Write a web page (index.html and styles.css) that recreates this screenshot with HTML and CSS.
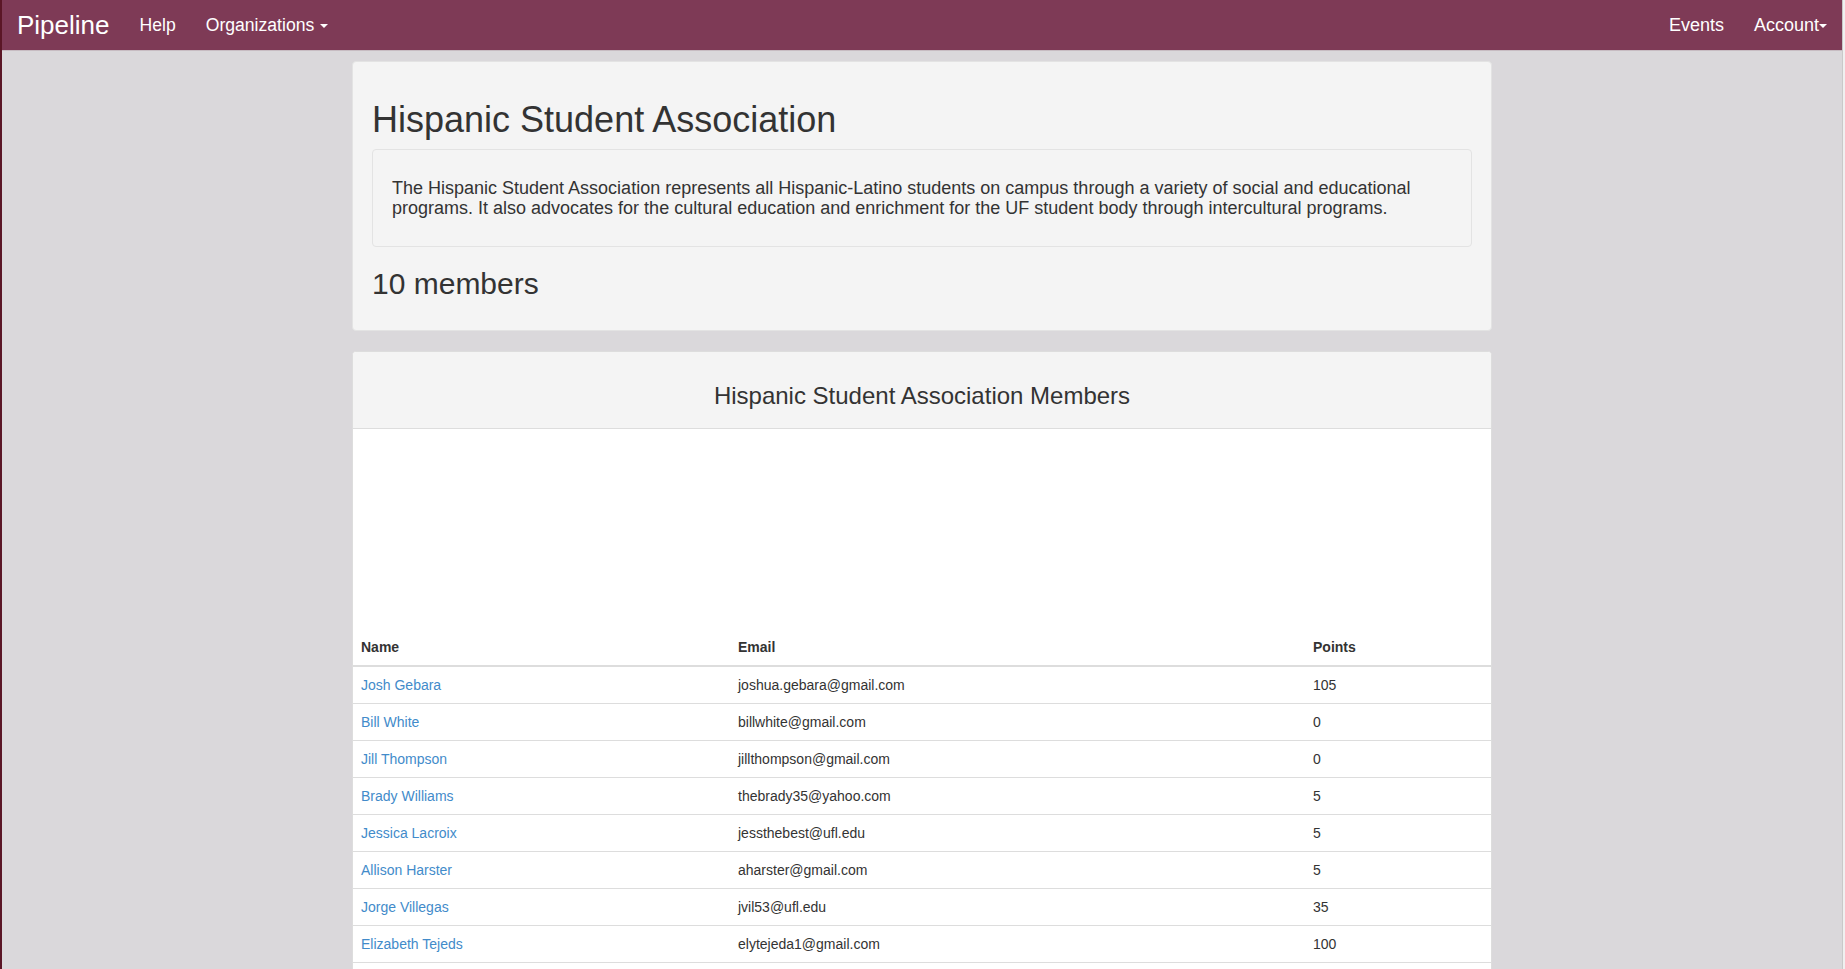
FILE: index.html
```html
<!DOCTYPE html>
<html lang="en">
<head>
<meta charset="utf-8">
<title>Pipeline - Hispanic Student Association</title>
<link rel="stylesheet" href="styles.css">
</head>
<body>
<div class="frame">
  <div class="edge-left"></div>
  <div class="page">
    <nav class="navbar">
      <a class="brand" href="#">Pipeline</a>
      <ul class="nav nav-left">
        <li><a href="#">Help</a></li>
        <li><a href="#">Organizations <span class="caret"></span></a></li>
      </ul>
      <ul class="nav nav-right">
        <li><a href="#">Events</a></li>
        <li><a href="#">Account<span class="caret tight"></span></a></li>
      </ul>
    </nav>
    <main class="container">
      <section class="jumbo">
        <h1 class="org-title">Hispanic Student Association</h1>
        <div class="well">
          <p>The Hispanic Student Association represents all Hispanic-Latino students on campus through a variety of social and educational programs. It also advocates for the cultural education and enrichment for the UF student body through intercultural programs.</p>
        </div>
        <h2 class="count">10 members</h2>
      </section>
      <section class="panel">
        <div class="panel-heading">
          <h3>Hispanic Student Association Members</h3>
        </div>
        <div class="chart-area"></div>
        <table class="members">
          <colgroup>
            <col class="col-name">
            <col class="col-email">
            <col class="col-points">
          </colgroup>
          <thead>
            <tr><th>Name</th><th>Email</th><th>Points</th></tr>
          </thead>
          <tbody>
            <tr><td><a href="#">Josh Gebara</a></td><td>joshua.gebara@gmail.com</td><td>105</td></tr>
            <tr><td><a href="#">Bill White</a></td><td>billwhite@gmail.com</td><td>0</td></tr>
            <tr><td><a href="#">Jill Thompson</a></td><td>jillthompson@gmail.com</td><td>0</td></tr>
            <tr><td><a href="#">Brady Williams</a></td><td>thebrady35@yahoo.com</td><td>5</td></tr>
            <tr><td><a href="#">Jessica Lacroix</a></td><td>jessthebest@ufl.edu</td><td>5</td></tr>
            <tr><td><a href="#">Allison Harster</a></td><td>aharster@gmail.com</td><td>5</td></tr>
            <tr><td><a href="#">Jorge Villegas</a></td><td>jvil53@ufl.edu</td><td>35</td></tr>
            <tr><td><a href="#">Elizabeth Tejeds</a></td><td>elytejeda1@gmail.com</td><td>100</td></tr>
            <tr><td><a href="#">&nbsp;</a></td><td>&nbsp;</td><td>&nbsp;</td></tr>
            <tr><td><a href="#">&nbsp;</a></td><td>&nbsp;</td><td>&nbsp;</td></tr>
          </tbody>
        </table>
      </section>
    </main>
  </div>
  <div class="edge-right"></div>
</div>
</body>
</html>
```
FILE: styles.css
```css
html, body {
  margin: 0;
  padding: 0;
  height: 100%;
  overflow: hidden;
}
body {
  font-family: "Liberation Sans", Arial, sans-serif;
  font-size: 14px;
  line-height: 20px;
  color: #333;
  background: #dad8db;
}
.frame {
  display: flex;
  height: 100vh;
  overflow: hidden;
}
.edge-left {
  width: 2px;
  flex: none;
  background: #5a1626;
}
.edge-right {
  width: 2px;
  flex: none;
  background: #f0f0f0;
  border-left: 1px solid #c9c9c9;
}
.page {
  flex: 1;
  min-width: 0;
  background: #dad8db;
  overflow: hidden;
}
.navbar {
  display: flex;
  align-items: center;
  height: 50px;
  padding-left: 15px;
  background: #7e3a56;
  border-bottom: 1px solid #c7bcc2;
}
.brand {
  font-size: 26px;
  line-height: 50px;
  color: #fff;
  text-decoration: none;
  padding-right: 15px;
}
.nav {
  display: flex;
  list-style: none;
  margin: 0;
  padding: 0;
}
.nav a {
  display: block;
  padding: 0 15px;
  font-size: 18px;
  line-height: 50px;
  color: #fff;
  text-decoration: none;
}
.nav-left a {
  font-size: 17.6px;
}
.nav-right {
  margin-left: auto;
}
.caret {
  display: inline-block;
  width: 0;
  height: 0;
  margin-left: 1px;
  vertical-align: middle;
  border-top: 4px solid #fff;
  border-left: 4px solid transparent;
  border-right: 4px solid transparent;
}
.caret.tight {
  margin-left: 0;
}
.container {
  width: 1140px;
  margin: 0 auto;
  padding-top: 10px;
}
.jumbo {
  background: #f4f4f4;
  border: 1px solid #e3e3e3;
  border-radius: 4px;
  padding: 18px 19px 20px;
}
.org-title {
  font-size: 36px;
  font-weight: 400;
  line-height: 1.1;
  margin: 20px 0 9px;
  color: #333;
}
.well {
  border: 1px solid #e3e3e3;
  border-radius: 4px;
  background: #f4f4f4;
  padding: 28px 19px 28px;
}
.well p {
  margin: 0;
  font-size: 18px;
  line-height: 20px;
}
.count {
  font-size: 30px;
  font-weight: 400;
  line-height: 1.1;
  margin: 20px 0 10px;
}
.panel {
  margin-top: 20px;
  background: #fff;
  border: 1px solid #dddddd;
  border-radius: 4px;
  overflow: hidden;
}
.panel-heading {
  background: #f4f4f4;
  border-bottom: 1px solid #dddddd;
  padding: 9px 15px 10px;
  text-align: center;
}
.panel-heading h3 {
  margin: 22px 0 9px;
  font-size: 24px;
  font-weight: 400;
  line-height: 1.1;
}
.chart-area {
  height: 200px;
}
.members {
  width: 100%;
  border-collapse: collapse;
  table-layout: fixed;
}
.col-name { width: 377px; }
.col-email { width: 575px; }
.col-points { width: auto; }
.members th,
.members td {
  text-align: left;
  padding: 8px;
  line-height: 20px;
  vertical-align: top;
}
.members th {
  font-weight: 700;
  border-bottom: 2px solid #dddddd;
}
.members td {
  border-top: 1px solid #dddddd;
}
.members thead + tbody tr:first-child td {
  border-top: 0;
}
.members a {
  color: #428bca;
  text-decoration: none;
}
```
